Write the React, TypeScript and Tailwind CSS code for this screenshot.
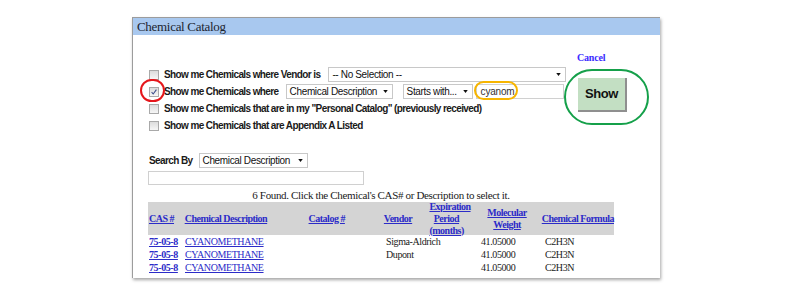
const sans = "font-['Liberation_Sans',Arial,sans-serif]";
const serif = "font-['Liberation_Serif','Times_New_Roman',serif]";

function Checkbox({ checked = false }: { checked?: boolean }) {
  return (
    <span className="relative flex h-[10px] w-[10px] shrink-0 items-center justify-center border border-[#a9a9a9] bg-gradient-to-b from-[#dcdcdc] to-[#f6f6f6]">
      {checked && (
        <svg viewBox="0 0 10 10" className="h-[8px] w-[8px]">
          <path d="M2 5.2 L4 7.5 L8 2" fill="none" stroke="#3a4a8a" strokeWidth="1.3" />
        </svg>
      )}
    </span>
  );
}

function Select({ label, className }: { label: string; className: string }) {
  return (
    <div
      className={`flex h-[15px] items-center justify-between border border-[#c8c8c8] bg-white pl-[3px] pr-[4px] text-[10px] font-normal tracking-[-0.35px] text-[#111] ${className}`}
    >
      <span className="whitespace-nowrap leading-none">{label}</span>
      <svg viewBox="0 0 6 4" className="ml-[4px] h-[3px] w-[5px] shrink-0">
        <path d="M0 0 H6 L3 4 Z" fill="#111" />
      </svg>
    </div>
  );
}

const rows = [
  { cas: "75-05-8", name: "CYANOMETHANE", vendor: "Sigma-Aldrich" },
  { cas: "75-05-8", name: "CYANOMETHANE", vendor: "Dupont" },
  { cas: "75-05-8", name: "CYANOMETHANE", vendor: "" },
];

export default function App() {
  return (
    <div className="relative h-[295px] w-[806px] overflow-hidden bg-white">
      <div className="ml-[132px] mt-[17px] h-[261px] w-[528px] border-l border-t border-[#9c9c9c] bg-white shadow-[1px_2px_3px_rgba(0,0,0,0.35)]">
        <div className={`flex h-[17px] items-center bg-[#a8c8ef] pl-[4px] text-[13px] tracking-[-0.3px] text-[#1c2530] ${serif}`}>
          Chemical Catalog
        </div>

        <div className="flex">
          <div className={`w-[434px] shrink-0 pl-[16px] pt-[31px] text-[10px] font-bold tracking-[-0.6px] text-[#1a1a1a] ${sans}`}>
            <div className="flex h-[17px] items-center">
              <Checkbox />
              <span className="ml-[5px] whitespace-nowrap">Show me Chemicals where Vendor is</span>
              <Select label="-- No Selection --" className="ml-[8px] w-[238px]" />
            </div>
            <div className="flex h-[17px] items-center">
              <Checkbox checked />
              <span className="ml-[5px] whitespace-nowrap">Show me Chemicals where</span>
              <Select label="Chemical Description" className="ml-[7px] w-[107px]" />
              <Select label="Starts with..." className="ml-[10px] w-[70px]" />
              <div className="ml-[3px] flex h-[15px] w-[88px] items-center border border-[#d0d0d0] bg-white pl-[4px] font-normal tracking-[-0.2px] text-[#333]">
                cyanom
              </div>
            </div>
            <div className="flex h-[17px] items-center">
              <Checkbox />
              <span className="ml-[5px] whitespace-nowrap">
                Show me Chemicals that are in my "Personal Catalog" (previously received)
              </span>
            </div>
            <div className="flex h-[17px] items-center">
              <Checkbox />
              <span className="ml-[5px] whitespace-nowrap">Show me Chemicals that are Appendix A Listed</span>
            </div>

            <div className="mt-[19px] flex h-[15px] items-center">
              <span className="whitespace-nowrap">Search By</span>
              <Select label="Chemical Description" className="ml-[6px] w-[109px]" />
            </div>
            <div className="ml-[-1px] mt-[3px] h-[14px] w-[216px] border border-[#d0d0d0] bg-white" />
          </div>

          <div className="ml-[10px] pt-[17px]">
            <div className={`h-[11px] text-[10px] font-bold leading-[11px] tracking-[-0.2px] text-[#3a2cff] ${serif}`}>
              Cancel
            </div>
            <button
              type="button"
              className={`ml-[1px] mt-[15px] flex h-[34px] w-[49px] items-center justify-center border-b-2 border-r-2 border-[#8f8f8f] bg-[#c3dfc3] text-[13px] font-bold tracking-[-0.4px] text-[#111] ${sans}`}
            >
              Show
            </button>
          </div>
        </div>

        <div className={`ml-[15px] w-[466px] text-[#1a1a1a] ${serif}`}>
          <div className="mt-[4px] h-[12px] text-center text-[11px] leading-[12px] tracking-[-0.35px]">
            6 Found. Click the Chemical's CAS# or Description to select it.
          </div>
          <div className="mt-[1px] flex h-[33px] items-center bg-[#d4d4d4] text-[10px] font-bold leading-[12px] tracking-[-0.5px] text-[#2b2bc8] underline">
            <span className="w-[37px] pl-[1px]">CAS #</span>
            <span className="w-[125px]">Chemical Description</span>
            <span className="w-[76px]">Catalog #</span>
            <span className="w-[46px]">Vendor</span>
            <span className="w-[34px] text-center">
              Expiration
              <br />
              Period
              <br />
              (months)
            </span>
            <span className="w-[9px]" />
            <span className="w-[70px] text-center">
              Molecular
              <br />
              Weight
            </span>
            <span className="whitespace-nowrap">Chemical Formula</span>
          </div>
          {rows.map((r, i) => (
            <div key={i} className="flex h-[13px] items-center text-[10px] leading-[13px] tracking-[-0.4px]">
              <span className="w-[37px] pl-[1px] font-bold text-[#2b2bc8] underline">{r.cas}</span>
              <span className="w-[125px] text-[#2b2bc8] underline">{r.name}</span>
              <span className="w-[76px]" />
              <span className="w-[89px] whitespace-nowrap">{r.vendor}</span>
              <span className="w-[70px] pl-[6px]">41.05000</span>
              <span>C2H3N</span>
            </div>
          ))}
        </div>
      </div>

      <div className="absolute left-[140px] top-[79px] h-[23px] w-[25px] rounded-full border-[2.5px] border-[#e5161b]" />
      <div className="absolute left-[474px] top-[81px] h-[19px] w-[44px] rounded-full border-[2.5px] border-[#f7b500]" />
      <div className="absolute left-[564px] top-[69px] h-[56px] w-[85px] rounded-full border-[2.5px] border-[#15a04a]" />
    </div>
  );
}
